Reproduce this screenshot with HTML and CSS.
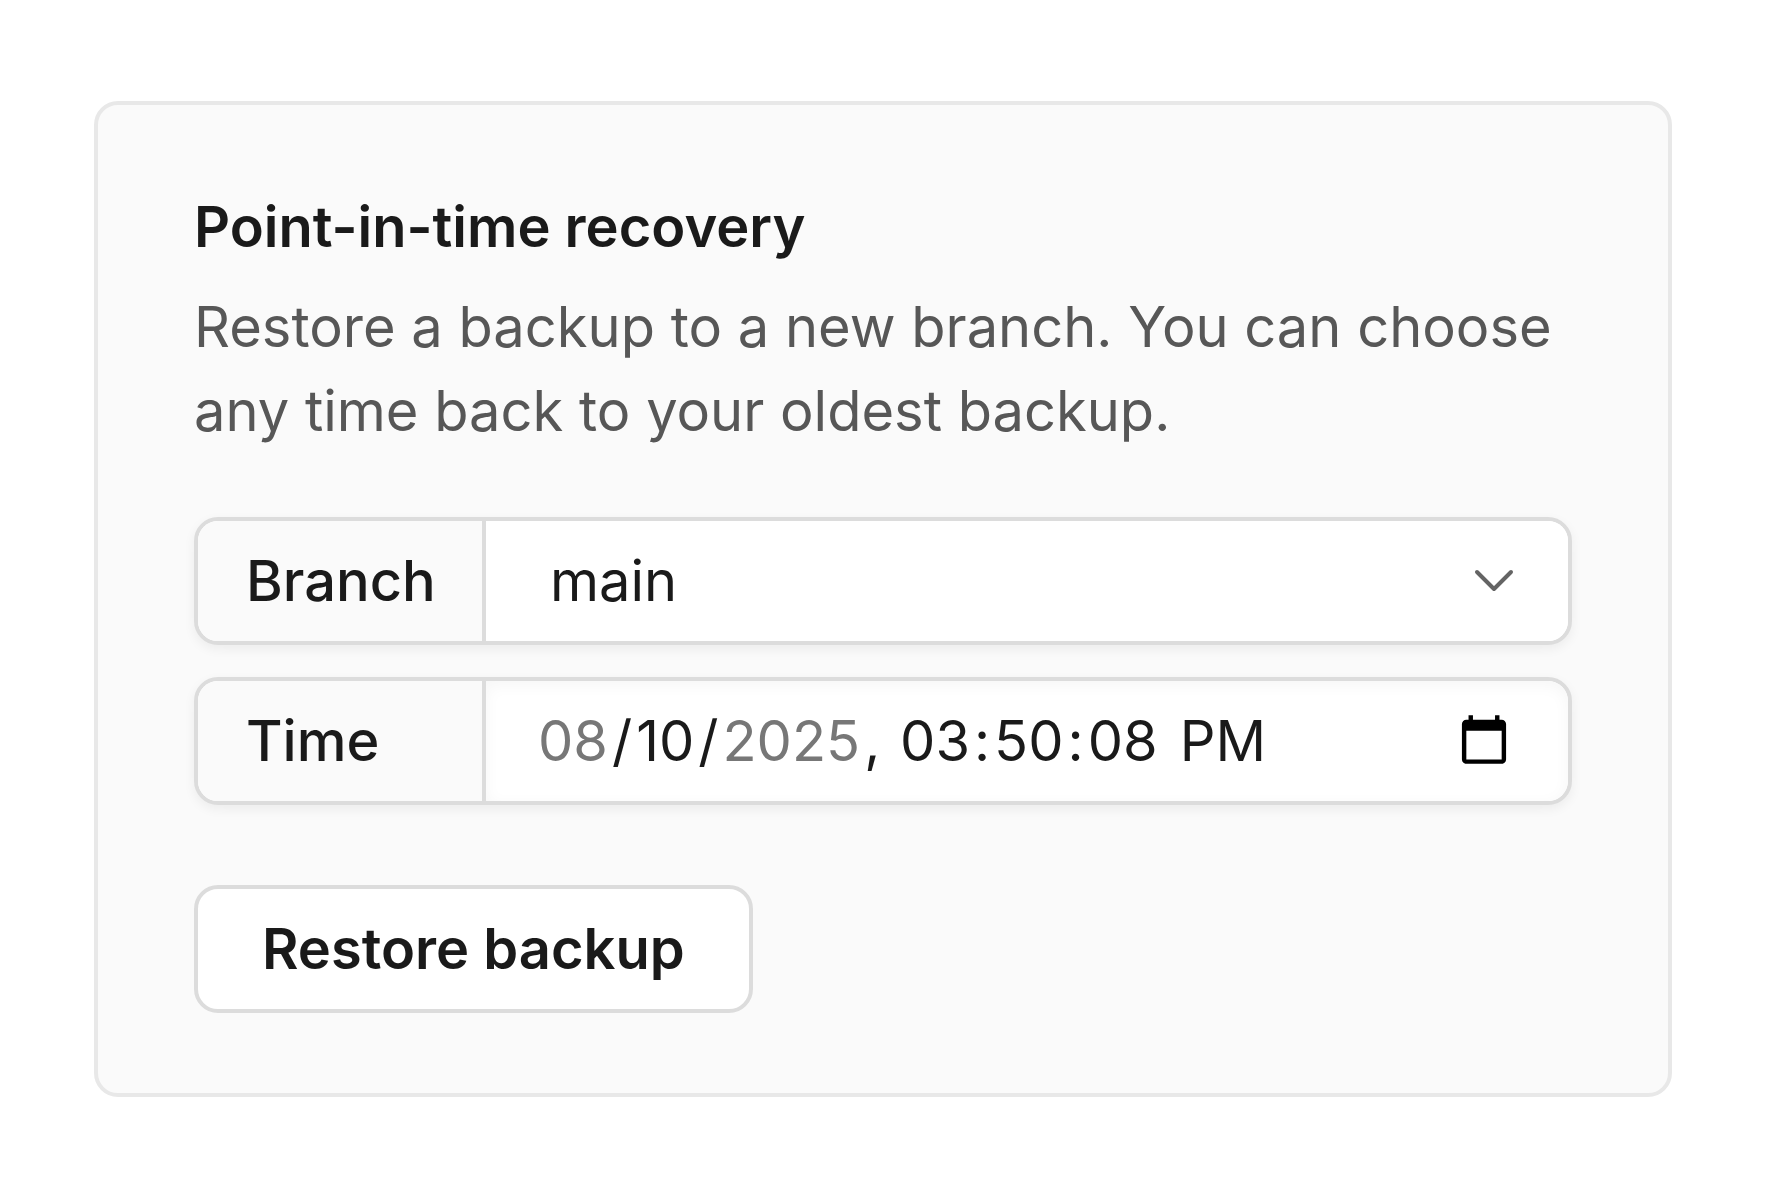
FILE: index.html
```html
<!DOCTYPE html>
<html lang="en-US">
<head>
<meta charset="utf-8">
<meta name="viewport" content="width=device-width, initial-scale=1">
<title>Point-in-time recovery</title>
<link rel="stylesheet" href="styles.css">
</head>
<body>
<main class="page">
  <form class="card">
    <h2 class="card-title">Point-in-time recovery</h2>
    <p class="card-text">Restore a backup to a new branch. You can choose any time back to your oldest backup.</p>
    <div class="fields">
      <div class="field">
        <label class="field-label" for="branch">Branch</label>
        <div class="select-wrap">
          <select class="control select" id="branch" name="branch">
            <option selected>main</option>
          </select>
          <svg class="chevron" viewBox="0 0 40 24" aria-hidden="true"><path d="M3 3 20 20 37 3"/></svg>
        </div>
      </div>
      <div class="field">
        <label class="field-label" for="time">Time</label>
        <input class="control time" id="time" name="time" type="datetime-local" step="1" min="2025-08-08T00:00:00" max="2025-08-10T23:59:59" value="2025-08-10T15:50:08">
      </div>
    </div>
    <button class="button" type="button">Restore backup</button>
  </form>
</main>
</body>
</html>
```
FILE: styles.css
```css
:root {
  --text: #1a1a1a;
  --muted: #575757;
  --surface: #fafafa;
  --border: #dcdcdc;
}

* {
  box-sizing: border-box;
}

body {
  margin: 0;
  background: #fff;
  color: var(--text);
  font: 400 56px/84px Inter, "Liberation Sans", sans-serif;
}

.page {
  padding: 101px 94px;
}

.card {
  padding: 80px 96px;
  border: 4px solid #e8e8e8;
  border-radius: 24px;
  background: var(--surface);
}

.card-title {
  margin: 0 0 16px;
  font-size: inherit;
  font-weight: 600;
}

.card-text {
  margin: 0 0 64px;
  color: var(--muted);
}

.fields {
  display: grid;
  gap: 32px;
  margin-bottom: 80px;
}

.field {
  display: grid;
  grid-template-columns: 288px 1fr;
  height: 128px;
  border: 4px solid var(--border);
  border-radius: 24px;
  background: #fff;
  box-shadow: 0 4px 12px rgba(0, 0, 0, 0.06);
  overflow: hidden;
}

.field-label {
  display: flex;
  align-items: center;
  padding: 0 48px;
  border-right: 4px solid var(--border);
  background: var(--surface);
  font-weight: 500;
}

.control {
  width: 100%;
  height: 120px;
  border: 0;
  border-radius: 0;
  background: #fff;
  color: var(--text);
  font: inherit;
  outline: none;
}

.select-wrap {
  display: grid;
  align-items: center;
}

.select {
  grid-area: 1 / 1;
  padding: 0 112px 0 64px;
  appearance: none;
}

.chevron {
  grid-area: 1 / 1;
  justify-self: end;
  width: 40px;
  height: 24px;
  margin-right: 54px;
  fill: none;
  stroke: #646464;
  stroke-width: 4;
  stroke-linecap: round;
  stroke-linejoin: round;
  pointer-events: none;
}

.time {
  padding: 0 54px 0 48px;
  border-radius: 0 20px 20px 0;
  box-shadow: inset 0 4px 16px rgba(0, 0, 0, 0.04);
}

.time::-webkit-datetime-edit-month-field,
.time::-webkit-datetime-edit-day-field,
.time::-webkit-datetime-edit-year-field,
.time::-webkit-datetime-edit-hour-field,
.time::-webkit-datetime-edit-minute-field,
.time::-webkit-datetime-edit-second-field {
  padding: 0 4px;
}

.time::-webkit-datetime-edit-ampm-field {
  padding: 0 8px;
}

.time::-webkit-datetime-edit-month-field,
.time::-webkit-datetime-edit-year-field {
  color: #777;
}

.button {
  height: 128px;
  padding: 0 64px;
  border: 4px solid var(--border);
  border-radius: 24px;
  background: #fff;
  color: var(--text);
  font: inherit;
  font-weight: 600;
}
```
